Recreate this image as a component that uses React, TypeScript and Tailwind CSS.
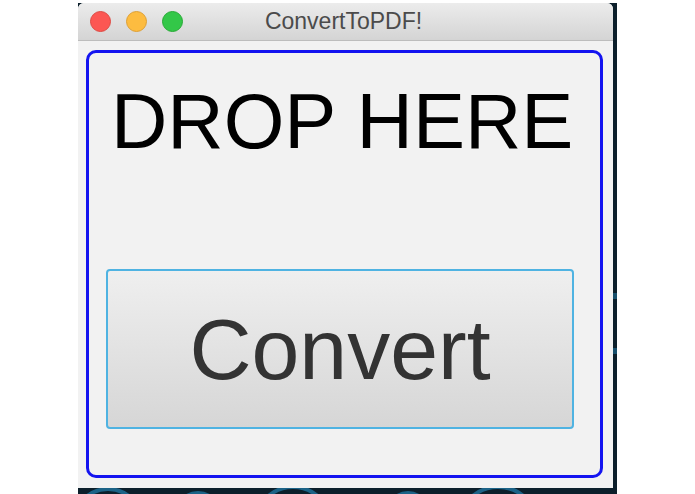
import React from 'react'

// desktop wallpaper swirls that peek out under the window
function Wallpaper() {
  return (
    <svg className="absolute inset-0 h-full w-full" viewBox="0 0 539 494" preserveAspectRatio="none">
      <rect width="539" height="494" fill="#0c1f2b" />
      <g fill="none" stroke="#1f6f98" strokeWidth="4" opacity="0.85">
        <circle cx="30" cy="520" r="34" />
        <circle cx="120" cy="512" r="22" />
        <circle cx="215" cy="522" r="38" />
        <circle cx="330" cy="510" r="20" />
        <circle cx="420" cy="524" r="40" />
      </g>
      <g fill="#1f6f98" opacity="0.6">
        <rect x="535" y="290" width="4" height="6" />
        <rect x="535" y="345" width="4" height="6" />
      </g>
    </svg>
  )
}

function TrafficLights() {
  return (
    <div className="flex items-center gap-[15px] pl-[12px]">
      <span className="h-[21px] w-[21px] rounded-full bg-[#fc5753] border border-[#de4a43]" />
      <span className="h-[21px] w-[21px] rounded-full bg-[#fdbc40] border border-[#dea034]" />
      <span className="h-[21px] w-[21px] rounded-full bg-[#33c748] border border-[#27aa35]" />
    </div>
  )
}

export default function App() {
  return (
    <div className="h-[494px] w-[695px] bg-white overflow-hidden" style={{ fontFamily: '"Liberation Sans", Arial, sans-serif' }}>
      <div className="relative ml-[78px] h-[494px] w-[539px]">
        <Wallpaper />

        {/* app window */}
        <div className="relative mt-[3px] flex h-[485px] w-[535px] flex-col overflow-hidden rounded-t-[6px] bg-[#f2f2f2]">
          {/* title bar */}
          <div className="relative flex h-[38px] shrink-0 items-center border-b border-[#bdbdbd] bg-gradient-to-b from-[#ececec] to-[#d4d4d4]">
            <TrafficLights />
            <div className="absolute inset-0 flex items-center justify-center pr-[4px] text-[23px] leading-none text-[#4b4b4b]">
              ConvertToPDF!
            </div>
          </div>

          {/* drop zone */}
          <div className="flex flex-1 flex-col pt-[9px] pl-[8px] pr-[10px] pb-[10px]">
            <div className="flex flex-1 flex-col rounded-[10px] border-[3px] border-[#1414f0]">
              <div className="pt-[29px] pl-[22px] text-[78px] leading-none text-black whitespace-nowrap">
                DROP HERE
              </div>
              <button className="ml-[17px] mt-[109px] flex h-[160px] w-[468px] items-center justify-center rounded-[4px] border-2 border-[#4fb3e2] bg-gradient-to-b from-[#efefef] to-[#d6d6d6] text-[86px] leading-none text-[#333333]">
                Convert
              </button>
            </div>
          </div>
        </div>
      </div>
    </div>
  )
}
